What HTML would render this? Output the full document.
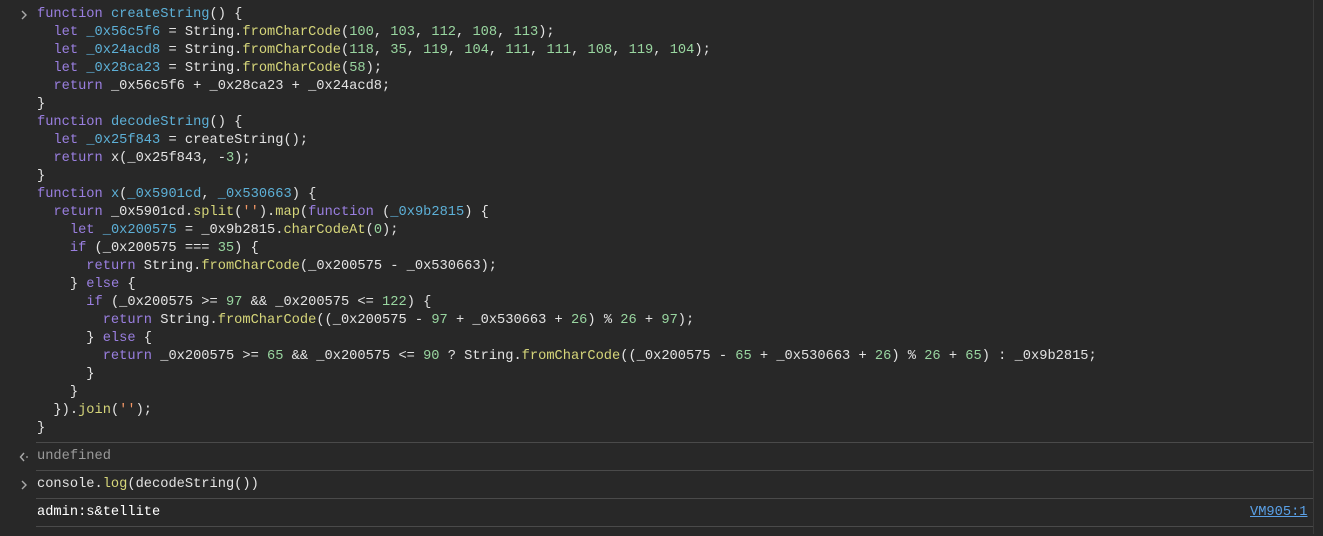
<!DOCTYPE html><html><head><style>
body{margin:0;background:#282828;width:1323px;height:534px;overflow:hidden;font-family:"Liberation Mono",monospace;font-size:13.7px;color:#e3e3e3;position:relative}
.w{position:absolute;left:0;top:2px;width:1323px;height:534px}
.l{position:absolute;left:37px;height:18px;line-height:18px;white-space:pre}
.k{color:#9a7fe0}.v{color:#5db0d7}.m{color:#d6d67a}.n{color:#99d6a0}.s{color:#f29766}
.sep{position:absolute;left:36px;width:1277px;height:1px;background:#4a4a4a}
</style></head><body>
<div style="position:absolute;left:1313px;top:0;width:1px;height:534px;background:#3a3a3a"></div>
<div class="w">
<svg style="position:absolute;left:20px;top:8px" width="8" height="10"><path d="M2 1l4 4-4 4" stroke="#aaa" fill="none" stroke-width="1.4"/></svg>
<div class="l" style="top:4px"><span class="k">function</span> <span class="v">createString</span>() {</div>
<div class="l" style="top:22px">  <span class="k">let</span> <span class="v">_0x56c5f6</span> = String.<span class="m">fromCharCode</span>(<span class="n">100</span>, <span class="n">103</span>, <span class="n">112</span>, <span class="n">108</span>, <span class="n">113</span>);</div>
<div class="l" style="top:40px">  <span class="k">let</span> <span class="v">_0x24acd8</span> = String.<span class="m">fromCharCode</span>(<span class="n">118</span>, <span class="n">35</span>, <span class="n">119</span>, <span class="n">104</span>, <span class="n">111</span>, <span class="n">111</span>, <span class="n">108</span>, <span class="n">119</span>, <span class="n">104</span>);</div>
<div class="l" style="top:58px">  <span class="k">let</span> <span class="v">_0x28ca23</span> = String.<span class="m">fromCharCode</span>(<span class="n">58</span>);</div>
<div class="l" style="top:76px">  <span class="k">return</span> _0x56c5f6 + _0x28ca23 + _0x24acd8;</div>
<div class="l" style="top:94px">}</div>
<div class="l" style="top:112px"><span class="k">function</span> <span class="v">decodeString</span>() {</div>
<div class="l" style="top:130px">  <span class="k">let</span> <span class="v">_0x25f843</span> = createString();</div>
<div class="l" style="top:148px">  <span class="k">return</span> x(_0x25f843, -<span class="n">3</span>);</div>
<div class="l" style="top:166px">}</div>
<div class="l" style="top:184px"><span class="k">function</span> <span class="v">x</span>(<span class="v">_0x5901cd</span>, <span class="v">_0x530663</span>) {</div>
<div class="l" style="top:202px">  <span class="k">return</span> _0x5901cd.<span class="m">split</span>(<span class="s">''</span>).<span class="m">map</span>(<span class="k">function</span> (<span class="v">_0x9b2815</span>) {</div>
<div class="l" style="top:220px">    <span class="k">let</span> <span class="v">_0x200575</span> = _0x9b2815.<span class="m">charCodeAt</span>(<span class="n">0</span>);</div>
<div class="l" style="top:238px">    <span class="k">if</span> (_0x200575 === <span class="n">35</span>) {</div>
<div class="l" style="top:256px">      <span class="k">return</span> String.<span class="m">fromCharCode</span>(_0x200575 - _0x530663);</div>
<div class="l" style="top:274px">    } <span class="k">else</span> {</div>
<div class="l" style="top:292px">      <span class="k">if</span> (_0x200575 &gt;= <span class="n">97</span> &amp;&amp; _0x200575 &lt;= <span class="n">122</span>) {</div>
<div class="l" style="top:310px">        <span class="k">return</span> String.<span class="m">fromCharCode</span>((_0x200575 - <span class="n">97</span> + _0x530663 + <span class="n">26</span>) % <span class="n">26</span> + <span class="n">97</span>);</div>
<div class="l" style="top:328px">      } <span class="k">else</span> {</div>
<div class="l" style="top:346px">        <span class="k">return</span> _0x200575 &gt;= <span class="n">65</span> &amp;&amp; _0x200575 &lt;= <span class="n">90</span> ? String.<span class="m">fromCharCode</span>((_0x200575 - <span class="n">65</span> + _0x530663 + <span class="n">26</span>) % <span class="n">26</span> + <span class="n">65</span>) : _0x9b2815;</div>
<div class="l" style="top:364px">      }</div>
<div class="l" style="top:382px">    }</div>
<div class="l" style="top:400px">  }).<span class="m">join</span>(<span class="s">''</span>);</div>
<div class="l" style="top:418px">}</div>
</div>
<div class="sep" style="top:442px"></div>
<svg style="position:absolute;left:19px;top:452px" width="10" height="10"><path d="M5 1l-3.5 4 3.5 4" stroke="#aaa" fill="none" stroke-width="1.4"/><circle cx="8" cy="5" r="0.9" fill="#aaa"/></svg>
<div class="l" style="top:448px;color:#9a9a9a">undefined</div>
<div class="sep" style="top:470px"></div>
<svg style="position:absolute;left:20px;top:480px" width="8" height="10"><path d="M2 1l4 4-4 4" stroke="#aaa" fill="none" stroke-width="1.4"/></svg>
<div class="l" style="top:476px">console.<span class="m">log</span>(decodeString())</div>
<div class="sep" style="top:498px"></div>
<div class="l" style="top:504px;color:#fff">admin:s&amp;tellite</div>
<div class="l" style="top:504px;left:1250px;color:#5aa0e6;text-decoration:underline">VM905:1</div>
<div class="sep" style="top:526px"></div>
</body></html>
